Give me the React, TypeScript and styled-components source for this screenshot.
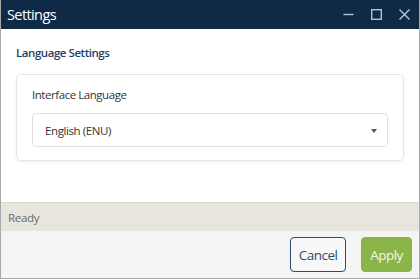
import React from "react";
import styled, { createGlobalStyle } from "styled-components";

const Global = createGlobalStyle`
  html, body { margin: 0; padding: 0; background: #ffffff; }
  body { font-family: "Open Sans", "Noto Sans", sans-serif; }
  * { box-sizing: border-box; }
`;

const Window = styled.div`
  width: 420px;
  height: 279px;
  display: flex;
  flex-direction: column;
  border-left: 1px solid #a9a9a9;
  border-right: 1px solid #a9a9a9;
  border-bottom: 1px solid #a9a9a9;
  background: #ffffff;
  overflow: hidden;
`;

const TitleBar = styled.div`
  height: 29px;
  flex: 0 0 29px;
  background: #0e2a47;
  display: flex;
  align-items: center;
  padding-left: 7px;
  margin: 0 -1px;
`;

const Title = styled.div`
  flex: 1;
  color: #ffffff;
  font-size: 14.5px;
  line-height: 29px;
  letter-spacing: -0.6px;
`;

const Controls = styled.div`
  display: flex;
  align-items: center;
  height: 29px;
  padding-right: 10px;
  gap: 17px;
`;

const CtrlIcon = styled.svg`
  width: 11px;
  height: 11px;
  display: block;
  stroke: #b7c2d0;
  stroke-width: 1.4;
  fill: none;
`;

const Content = styled.div`
  flex: 1;
  padding: 15px 15px 0 15px;
  display: flex;
  flex-direction: column;
`;

const Heading = styled.div`
  color: #1f3f6b;
  font-size: 11.5px;
  font-weight: 600;
  line-height: 18px;
  letter-spacing: -0.45px;
`;

const Card = styled.div`
  margin-top: 12px;
  height: 87px;
  border: 1px solid #e6e6e6;
  border-radius: 5px;
  box-shadow: 0 1px 3px rgba(0, 0, 0, 0.06);
  padding: 12px 15px 0 15px;
  display: flex;
  flex-direction: column;
`;

const Label = styled.div`
  color: #333333;
  font-size: 11.5px;
  line-height: 16px;
  letter-spacing: -0.45px;
`;

const Select = styled.div`
  margin-top: 10px;
  height: 34px;
  border: 1px solid #e0e0e0;
  border-radius: 4px;
  display: flex;
  align-items: center;
  padding: 0 10px 0 12px;
  color: #333333;
  font-size: 11.5px;
  letter-spacing: -0.4px;
`;

const SelectText = styled.span`
  flex: 1;
`;

const Arrow = styled.span`
  width: 0;
  height: 0;
  border-left: 3px solid transparent;
  border-right: 3px solid transparent;
  border-top: 4px solid #555555;
  margin-top: 1px;
`;

const StatusBar = styled.div`
  height: 29px;
  flex: 0 0 29px;
  background: #e8e5de;
  border-top: 1px solid #dedad1;
  display: flex;
  align-items: center;
  padding-left: 7px;
  color: #6a6a6a;
  font-size: 11.5px;
  letter-spacing: -0.3px;
`;

const Footer = styled.div`
  height: 47px;
  flex: 0 0 47px;
  background: #f4f4f4;
  display: flex;
  align-items: center;
  justify-content: flex-end;
  padding-right: 7px;
  gap: 15px;
`;

const Button = styled.button<{ $primary?: boolean }>`
  height: 35px;
  border-radius: 4px;
  font-family: "Open Sans", "Noto Sans", sans-serif;
  font-size: 13.5px;
  letter-spacing: -0.5px;
  padding: 0;
  cursor: pointer;
  width: ${(p) => (p.$primary ? "51px" : "56px")};
  border: 1px solid ${(p) => (p.$primary ? "#8ab548" : "#2d4a6d")};
  background: ${(p) => (p.$primary ? "#8ab548" : "#f8f8f8")};
  color: ${(p) => (p.$primary ? "#f2f7ea" : "#2d4a6d")};
`;

export default function App() {
  return (
    <>
      <Global />
      <Window>
        <TitleBar>
          <Title>Settings</Title>
          <Controls>
            <CtrlIcon viewBox="0 0 11 11">
              <line x1="0.5" y1="5.5" x2="10.5" y2="5.5" />
            </CtrlIcon>
            <CtrlIcon viewBox="0 0 11 11">
              <rect x="0.7" y="0.7" width="9.6" height="9.6" />
            </CtrlIcon>
            <CtrlIcon viewBox="0 0 11 11">
              <line x1="0.5" y1="0.5" x2="10.5" y2="10.5" />
              <line x1="10.5" y1="0.5" x2="0.5" y2="10.5" />
            </CtrlIcon>
          </Controls>
        </TitleBar>
        <Content>
          <Heading>Language Settings</Heading>
          <Card>
            <Label>Interface Language</Label>
            <Select>
              <SelectText>English (ENU)</SelectText>
              <Arrow />
            </Select>
          </Card>
        </Content>
        <StatusBar>Ready</StatusBar>
        <Footer>
          <Button>Cancel</Button>
          <Button $primary>Apply</Button>
        </Footer>
      </Window>
    </>
  );
}
